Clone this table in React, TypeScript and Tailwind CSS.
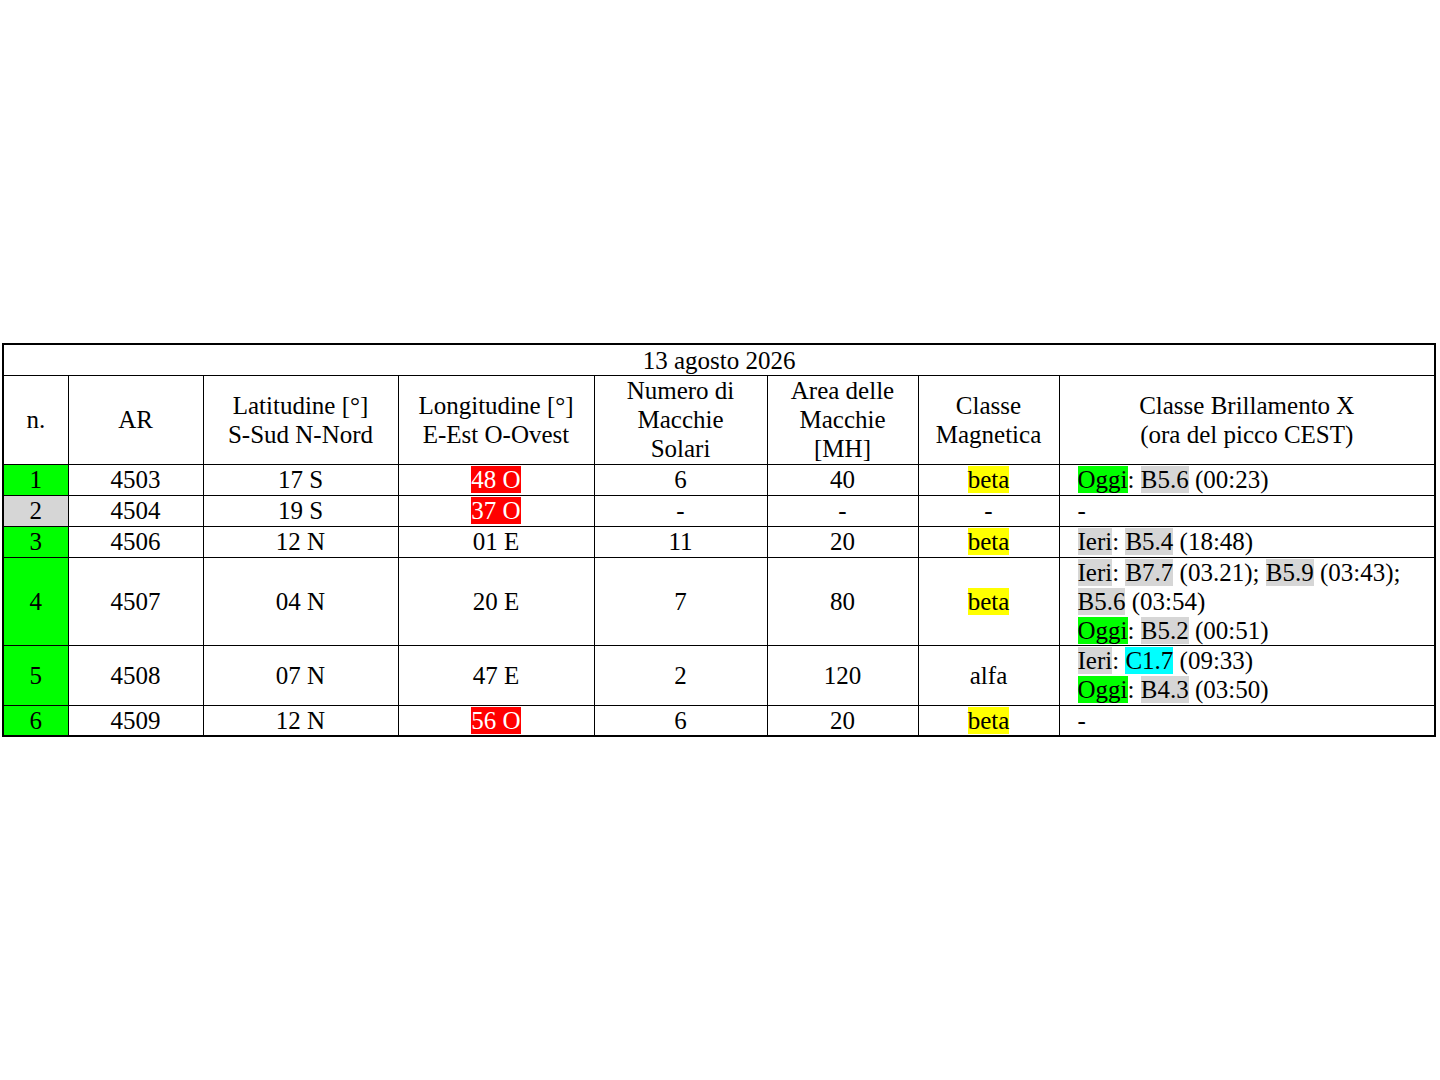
import React from 'react';

type Hl = 'g' | 'x' | 'c';

const hlClass: Record<Hl, string> = {
  g: 'bg-[#00ff00]',
  x: 'bg-[#d6d6d6]',
  c: 'bg-[#00ffff]',
};

const M = ({ k, children }: { k: Hl; children: React.ReactNode }) => (
  <span className={hlClass[k]}>{children}</span>
);

const td = 'border border-black p-0 text-center align-middle';

const rows = [
  { n: '1', nBg: 'bg-[#00ff00]', ar: '4503', lat: '17 S', lon: '48 O', red: true, num: '6', area: '40', mag: 'beta', h: 'h-[31px]', fl: <><M k="g">Oggi</M>: <M k="x">B5.6</M> (00:23)</> },
  { n: '2', nBg: 'bg-[#d6d6d6]', ar: '4504', lat: '19 S', lon: '37 O', red: true, num: '-', area: '-', mag: '-', h: 'h-[31px]', fl: <>-</> },
  { n: '3', nBg: 'bg-[#00ff00]', ar: '4506', lat: '12 N', lon: '01 E', red: false, num: '11', area: '20', mag: 'beta', h: 'h-[31px]', fl: <><M k="x">Ieri</M>: <M k="x">B5.4</M> (18:48)</> },
  {
    n: '4', nBg: 'bg-[#00ff00]', ar: '4507', lat: '04 N', lon: '20 E', red: false, num: '7', area: '80', mag: 'beta', h: 'h-[87px]',
    fl: <><M k="x">Ieri</M>: <M k="x">B7.7</M> (03.21); <M k="x">B5.9</M> (03:43);<br /><M k="x">B5.6</M> (03:54)<br /><M k="g">Oggi</M>: <M k="x">B5.2</M> (00:51)</>,
  },
  {
    n: '5', nBg: 'bg-[#00ff00]', ar: '4508', lat: '07 N', lon: '47 E', red: false, num: '2', area: '120', mag: 'alfa', h: 'h-[60px]',
    fl: <><M k="x">Ieri</M>: <M k="c">C1.7</M> (09:33)<br /><M k="g">Oggi</M>: <M k="x">B4.3</M> (03:50)</>,
  },
  { n: '6', nBg: 'bg-[#00ff00]', ar: '4509', lat: '12 N', lon: '56 O', red: true, num: '6', area: '20', mag: 'beta', h: 'h-[30px]', fl: <>-</> },
];

export default function App() {
  return (
    <div className="flex h-screen w-full items-center bg-white text-black font-['Liberation_Serif','Times_New_Roman',serif] text-[25px] leading-[29px]">
      <table className="ml-[2px] w-[1432px] table-fixed border-collapse border-2 border-black">
        <colgroup>
          <col className="w-[65px]" />
          <col className="w-[135px]" />
          <col className="w-[195px]" />
          <col className="w-[196px]" />
          <col className="w-[173px]" />
          <col className="w-[151px]" />
          <col className="w-[141px]" />
          <col className="w-[376px]" />
        </colgroup>
        <tbody>
          <tr className="h-[31px]">
            <td colSpan={8} className={td}>13 agosto 2026</td>
          </tr>
          <tr className="h-[89px]">
            <td className={td}>n.</td>
            <td className={td}>AR</td>
            <td className={td}>Latitudine [°]<br />S-Sud N-Nord</td>
            <td className={td}>Longitudine [°]<br />E-Est O-Ovest</td>
            <td className={td}>Numero di<br />Macchie<br />Solari</td>
            <td className={td}>Area delle<br />Macchie<br />[MH]</td>
            <td className={td}>Classe<br />Magnetica</td>
            <td className={td}>Classe Brillamento X<br />(ora del picco CEST)</td>
          </tr>
          {rows.map((r) => (
            <tr key={r.n} className={r.h}>
              <td className={`${td} ${r.nBg}`}>{r.n}</td>
              <td className={td}>{r.ar}</td>
              <td className={td}>{r.lat}</td>
              <td className={td}>
                {r.red ? <span className="bg-[#ff0000] text-white">{r.lon}</span> : r.lon}
              </td>
              <td className={td}>{r.num}</td>
              <td className={td}>{r.area}</td>
              <td className={td}>
                {r.mag === 'beta' ? <span className="bg-[#ffff00]">{r.mag}</span> : r.mag}
              </td>
              <td className="border border-black py-0 pl-[18px] pr-1 text-left align-middle">{r.fl}</td>
            </tr>
          ))}
        </tbody>
      </table>
    </div>
  );
}
